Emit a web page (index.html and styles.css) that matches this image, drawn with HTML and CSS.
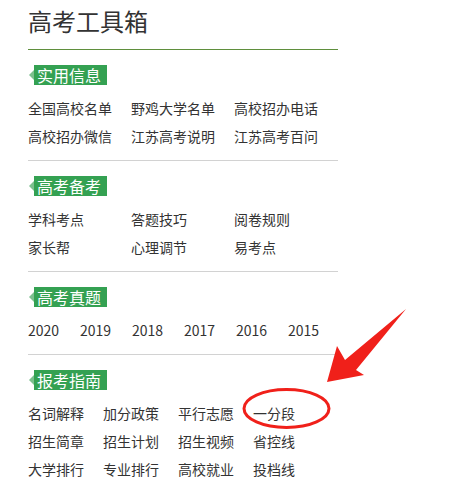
FILE: index.html
```html
<!DOCTYPE html>
<html lang="zh-CN">
<head>
  <meta charset="UTF-8">
  <title>高考工具箱</title>
  <link rel="stylesheet" href="styles.css">
</head>
<body>
  <div class="box">
    <h2 class="title">高考工具箱</h2>

    <div class="section">
      <div class="tag">实用信息</div>
      <div class="links cols3">
        <a>全国高校名单</a>
        <a>野鸡大学名单</a>
        <a>高校招办电话</a>
        <a>高校招办微信</a>
        <a>江苏高考说明</a>
        <a>江苏高考百问</a>
      </div>
    </div>

    <div class="section">
      <div class="tag">高考备考</div>
      <div class="links cols3">
        <a>学科考点</a>
        <a>答题技巧</a>
        <a>阅卷规则</a>
        <a>家长帮</a>
        <a>心理调节</a>
        <a>易考点</a>
      </div>
    </div>

    <div class="section">
      <div class="tag">高考真题</div>
      <div class="links years">
        <a>2020</a>
        <a>2019</a>
        <a>2018</a>
        <a>2017</a>
        <a>2016</a>
        <a>2015</a>
      </div>
    </div>

    <div class="section last">
      <div class="tag">报考指南</div>
      <div class="links cols4">
        <a>名词解释</a>
        <a>加分政策</a>
        <a>平行志愿</a>
        <a>一分段</a>
        <a>招生简章</a>
        <a>招生计划</a>
        <a>招生视频</a>
        <a>省控线</a>
        <a>大学排行</a>
        <a>专业排行</a>
        <a>高校就业</a>
        <a>投档线</a>
      </div>
    </div>
  </div>

  <svg class="mark" width="473" height="490" viewBox="0 0 473 490">
    <ellipse cx="286.5" cy="408.5" rx="42.5" ry="19" fill="none" stroke="#f0201a" stroke-width="3"/>
    <polygon points="327,382 337,346 345,360 406,309 356,370 364,375" fill="#f0201a"/>
  </svg>
</body>
</html>
```

FILE: styles.css
```css
body {
  margin: 0;
  font-family: "Noto Sans CJK SC", "Noto Sans", sans-serif;
  color: #333;
  background: #fff;
}
.box {
  width: 310px;
  padding-left: 28px;
}
.title {
  margin: 0;
  padding: 6px 0 13px;
  font-size: 24px;
  line-height: 30px;
  font-weight: normal;
  color: #333;
  border-bottom: 1px solid #5f8f3d;
}
.section {
  padding: 15px 0 10px;
  border-bottom: 1px solid #d2d2d2;
}
.section.last {
  border-bottom: none;
}
.tag {
  display: flex;
  align-items: center;
  width: fit-content;
  height: 20px;
  padding-right: 6px;
  font-size: 16px;
  line-height: 20px;
  color: #fff;
  background: linear-gradient(to right, transparent 6px, #34a152 6px);
}
.tag::before {
  content: "";
  display: block;
  margin-left: 1px;
  margin-right: 3px;
  border-top: 5px solid transparent;
  border-bottom: 5px solid transparent;
  border-right: 5px solid #7cc08e;
}
.links {
  display: grid;
  margin-top: 9px;
  font-size: 14px;
  line-height: 28px;
}
.links a {
  color: #333;
  white-space: nowrap;
}
.cols3 {
  grid-template-columns: repeat(3, 103px);
}
.cols4 {
  grid-template-columns: repeat(4, 75px);
}
.years {
  grid-template-columns: repeat(6, 52px);
}
.mark {
  position: absolute;
  left: 0;
  top: 0;
  pointer-events: none;
}
```
